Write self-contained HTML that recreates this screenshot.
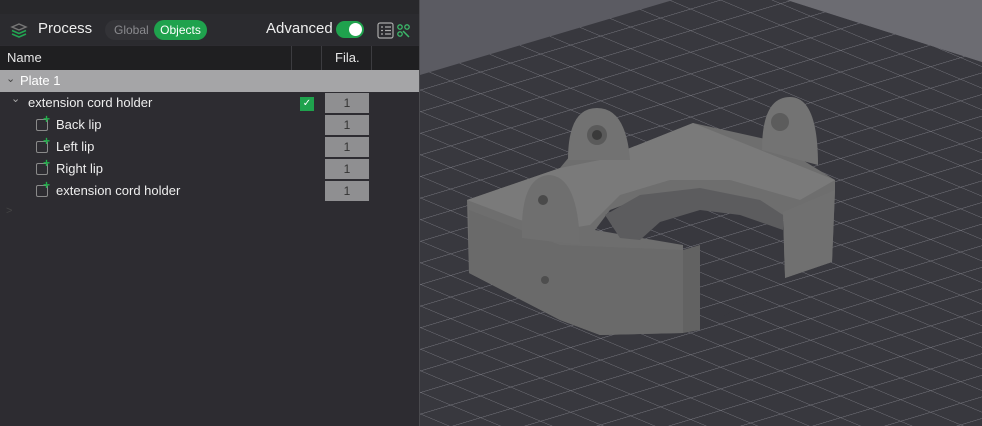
<!DOCTYPE html>
<html><head><meta charset="utf-8"><style>
*{margin:0;padding:0;box-sizing:border-box}
body{width:982px;height:426px;overflow:hidden;background:#2c2c30;font-family:"Liberation Sans",sans-serif;position:relative}
#left{position:absolute;left:0;top:0;width:419px;height:426px;background:#2d2c31}
.top{position:absolute;left:0;top:0;width:419px;height:14px;background:#28282b}
.hdr{position:absolute;left:0;top:14px;width:419px;height:31px;background:#2b2b2f}
.th{position:absolute;left:0;top:46px;width:419px;height:24px;background:#1f1f21;color:#e6e6e6;font-size:13px}
.th span{position:absolute;top:4px}
.sep{position:absolute;top:0;width:1px;height:24px;background:#3c3c40}
.plate{position:absolute;left:0;top:70px;width:419px;height:22px;background:#a5a5a7;color:#fff;font-size:13px}
.row{position:absolute;left:0;width:419px;height:22px;color:#eee;font-size:13px}
.row .t{position:absolute;top:3px}
.fila{position:absolute;left:325px;top:1px;width:44px;height:20px;background:#8f8f91;color:#333;font-size:12px;text-align:center;line-height:20px}
.pic{position:absolute;left:36px;top:5px;width:12px;height:12px;border:1.5px solid #8a8a8a;border-radius:2px}
.pic:after{content:"+";position:absolute;left:6px;top:-8px;color:#22b14c;font-size:12px;font-weight:bold}
</style></head><body>
<div id="left">
<div class="top"></div>
<div class="hdr">
 <svg style="position:absolute;left:10px;top:8px" width="18" height="16" viewBox="0 0 18 16"><path d="M2 5 L9 2 L16 5 L9 8Z" fill="none" stroke="#777" stroke-width="1.4"/><path d="M2 8.5 L9 11.5 L16 8.5" fill="none" stroke="#22a552" stroke-width="1.6"/><path d="M2 12 L9 15 L16 12" fill="none" stroke="#22a552" stroke-width="1.6"/></svg>
 <span style="position:absolute;left:38px;top:6px;color:#eee;font-size:15px">Process</span>
 <div style="position:absolute;left:105px;top:6px;width:102px;height:20px;border-radius:10px;background:#333337"></div>
 <span style="position:absolute;left:114px;top:9px;color:#8a8a8e;font-size:12px">Global</span>
 <div style="position:absolute;left:154px;top:6px;width:53px;height:20px;border-radius:10px;background:#1fa24d;color:#fff;font-size:12px;text-align:center;line-height:20px">Objects</div>
 <span style="position:absolute;left:266px;top:6px;color:#eee;font-size:15px">Advanced</span>
 <div style="position:absolute;left:336px;top:7px;width:28px;height:17px;border-radius:9px;background:#1fa24d"><div style="position:absolute;right:2px;top:2px;width:13px;height:13px;border-radius:50%;background:#fff"></div></div>
 <svg style="position:absolute;left:377px;top:8px" width="36" height="17" viewBox="0 0 36 17"><rect x="1" y="1" width="15" height="15" rx="2" fill="none" stroke="#aaa" stroke-width="1.2"/><path d="M4 5h2M8 5h6M4 8.5h2M8 8.5h6M4 12h2M8 12h6" stroke="#aaa" stroke-width="1.2"/><circle cx="23" cy="5" r="2.2" fill="none" stroke="#3cb86a" stroke-width="1.3"/><circle cx="30" cy="5" r="2.2" fill="none" stroke="#3cb86a" stroke-width="1.3"/><circle cx="23" cy="12" r="2.2" fill="none" stroke="#3cb86a" stroke-width="1.3"/><path d="M26 9 L32 15" stroke="#3cb86a" stroke-width="1.5"/></svg>
</div>
<div class="th"><span style="left:7px">Name</span><div class="sep" style="left:291px"></div><div class="sep" style="left:321px"></div><span style="left:335px">Fila.</span><div class="sep" style="left:371px"></div></div>
<div class="plate"><span style="position:absolute;left:6px;top:2px;font-size:11px;color:#444">&#8964;</span><span style="position:absolute;left:20px;top:3px">Plate 1</span></div>
<div class="row" style="top:92px"><span class="t" style="left:11px;color:#aaa;font-size:11px;top:0">&#8964;</span><span class="t" style="left:28px">extension cord holder</span><div style="position:absolute;left:300px;top:5px;width:14px;height:14px;background:#1fa24d;color:#fff;font-size:10px;text-align:center;line-height:14px">&#10003;</div><div class="fila">1</div></div>
<div class="row" style="top:114px"><div class="pic"></div><span class="t" style="left:56px">Back lip</span><div class="fila">1</div></div>
<div class="row" style="top:136px"><div class="pic"></div><span class="t" style="left:56px">Left lip</span><div class="fila">1</div></div>
<div class="row" style="top:158px"><div class="pic"></div><span class="t" style="left:56px">Right lip</span><div class="fila">1</div></div>
<div class="row" style="top:180px"><div class="pic"></div><span class="t" style="left:56px">extension cord holder</span><div class="fila">1</div></div>
<span style="position:absolute;left:6px;top:205px;color:#444;font-size:11px">&gt;</span>
</div>
<div style="position:absolute;left:419px;top:0;width:1px;height:426px;background:#4a4a4e"></div>
<svg style="position:absolute;left:420px;top:0" width="562" height="426" viewBox="420 0 562 426">
<defs>
<pattern id="g" width="30" height="30" patternUnits="userSpaceOnUse" patternTransform="matrix(1,0.42,1,-0.3,0,0)">
<path d="M0 0H30M0 0V30" stroke="#7c7c84" stroke-width="1.3" fill="none"/>
</pattern>
<clipPath id="pc"><polygon points="420,75 673,0 787,0 982,62 982,426 420,426"/></clipPath>
</defs>
<rect x="420" y="0" width="562" height="426" fill="#5b5b62"/>
<polygon points="420,75 673,0 787,0 982,62 982,426 420,426" fill="#38383e"/>
<rect x="420" y="0" width="562" height="426" fill="url(#g)" clip-path="url(#pc)"/>
<polygon points="787,0 982,0 982,62" fill="#6c6c72"/>
<!-- body -->
<polygon points="467,200 560,168 575,150 600,160 693,123 770,140 835,180 835,190 832,262 785,278 783,215 760,205 705,190 650,195 610,210 595,230 683,245 683,333 600,335 560,320 469,273" fill="#6e6e6e"/>
<polygon points="467,200 560,168 600,160 693,123 835,180 800,200 730,180 670,180 620,195 590,225 560,230 520,220" fill="#7a7a7a"/>
<polygon points="605,215 640,195 700,188 760,200 783,215 783,230 740,215 700,210 660,222 640,240 620,238" fill="#5c5c5e"/>
<polygon points="783,212 835,190 832,262 785,278" fill="#707070"/>
<!-- opening under arc -->
<polygon points="700,240 740,226 783,236 785,280 700,330" fill="#38383e"/>
<polygon points="700,240 740,226 783,236 785,280 700,330" fill="url(#g)"/>
<polygon points="469,210 560,245 683,250 683,333 600,335 560,320 469,273" fill="#6a6a6a"/>
<polygon points="683,250 700,245 700,330 683,333" fill="#626262"/>
<!-- ears -->
<path d="M568,160 Q568,108 597,108 Q626,108 630,160Z" fill="#727272"/>
<circle cx="597" cy="135" r="10" fill="#5a5a5a"/><circle cx="597" cy="135" r="5" fill="#3a3a3a"/>
<path d="M762,150 Q762,97 790,97 Q818,97 818,165Z" fill="#737373"/>
<circle cx="780" cy="122" r="9" fill="#5c5c5c"/>
<path d="M522,238 Q520,178 548,175 Q578,175 580,245Z" fill="#6f6f6f"/>
<circle cx="543" cy="200" r="5" fill="#4a4a4a"/>
<circle cx="545" cy="280" r="4" fill="#4e4e4e"/>
</svg>
</body></html>
